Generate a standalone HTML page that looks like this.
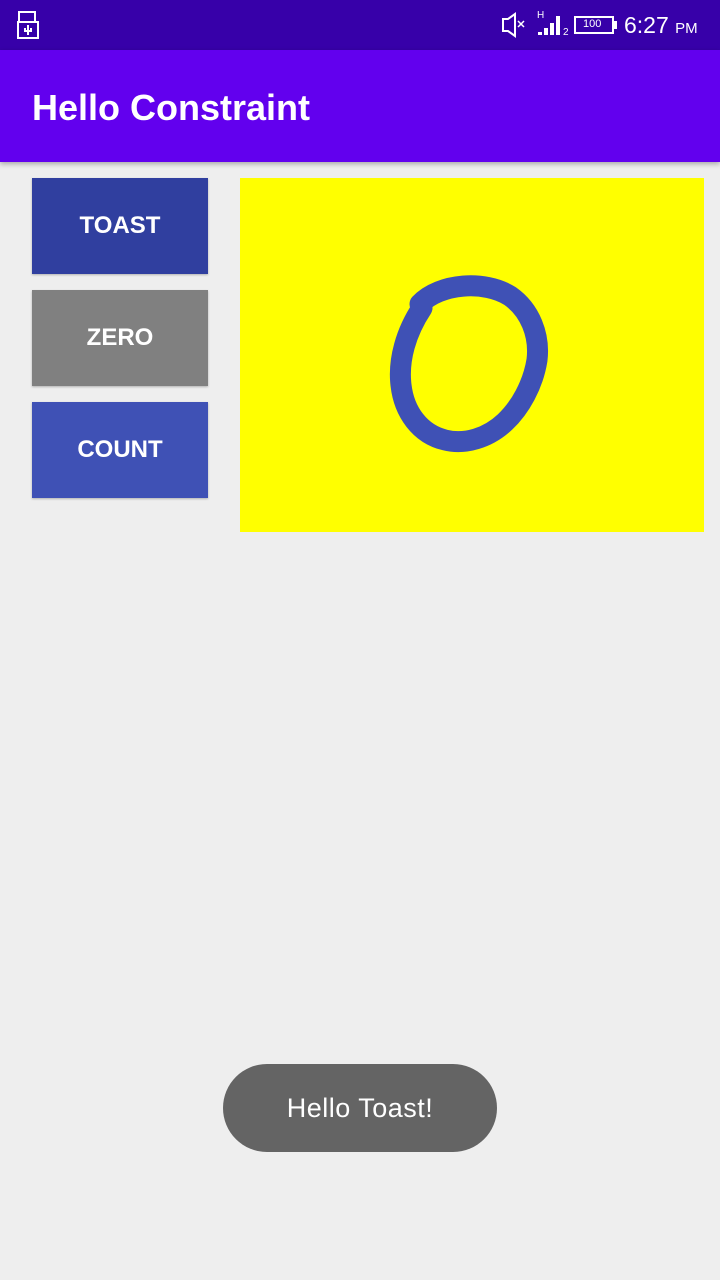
<!DOCTYPE html>
<html><head><meta charset="utf-8"><style>
*{margin:0;padding:0;box-sizing:border-box}
body{width:720px;height:1280px;background:#eeeeee;font-family:"Liberation Sans",Roboto,sans-serif;position:relative;overflow:hidden}
.status{position:absolute;left:0;top:0;width:720px;height:50px;background:#3700a9;color:#fff}
.bar{position:absolute;left:0;top:50px;width:720px;height:112px;background:#6200ee;box-shadow:0 2px 5px rgba(0,0,0,.3)}
.btn{position:absolute;left:32px;width:176px;height:96px;color:#fff;font-size:24px;font-weight:bold;display:flex;align-items:center;justify-content:center;box-shadow:0 1px 2px rgba(0,0,0,.25)}
.yel{position:absolute;left:240px;top:178px;width:464px;height:354px;background:#ffff00}
.toast{position:absolute;left:223px;top:1064px;width:274px;height:88px;border-radius:44px;background:#646464;color:#fff;font-size:27px;display:flex;align-items:center;justify-content:center;letter-spacing:0.5px}
</style></head><body>
<div class="status">
<svg width="720" height="50" style="position:absolute;left:0;top:0" fill="none" stroke="#fff" stroke-width="2">
<rect x="19" y="12" width="16" height="10"/><rect x="18" y="22" width="20" height="16"/>
<path d="M28 25v10M25 28v3h6v-3"/>
<path d="M503 19h5l7-5v22l-7-5h-5z"/><path d="M518 21l6 6M524 21l-6 6" stroke-width="1.5"/>
<path d="M540 32v3M546 28v7M552 23v12M558 16v19" stroke-width="4"/>
<rect x="575" y="17" width="38" height="16"/><rect x="613" y="22" width="3" height="6" fill="#fff"/>
</svg>
<span style="position:absolute;left:537px;top:10px;font-size:10px">H</span>
<span style="position:absolute;left:563px;top:27px;font-size:10px">2</span>
<span style="position:absolute;left:583px;top:18px;font-size:11px">100</span>
<span style="position:absolute;left:624px;top:12px;font-size:23px">6:27 <span style="font-size:15px">PM</span></span>
</div>
<div class="bar"></div>
<div style="position:absolute;left:32px;top:87px;font-size:36px;font-weight:bold;color:#fff">Hello Constraint</div>
<div class="btn" style="top:178px;background:#303f9f">TOAST</div>
<div class="btn" style="top:290px;background:#808080">ZERO</div>
<div class="btn" style="top:402px;background:#3f51b5">COUNT</div>
<div class="yel"></div>
<svg width="720" height="600" style="position:absolute;left:0;top:0">
<path d="M420 304 C440 283 485 280 510 296 C530 310 540 335 537 360 C533 385 520 408 505 422 C488 438 465 445 445 440 C420 434 404 412 401 385 C398 360 406 332 422 308" fill="none" stroke="#3f51b5" stroke-width="21" stroke-linecap="round"/>
</svg>
<div class="toast">Hello Toast!</div>
</body></html>
